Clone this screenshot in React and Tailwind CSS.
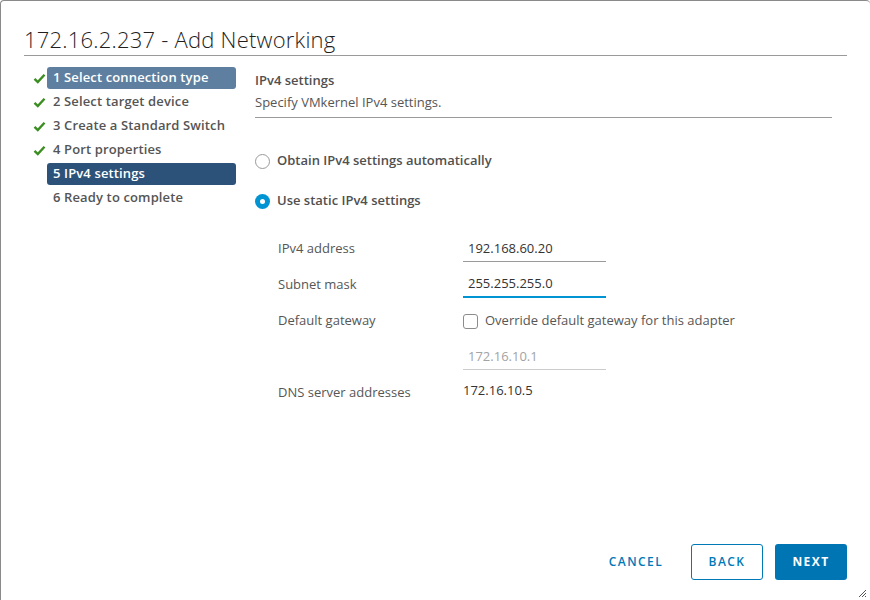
import React from "react";

const steps = [
  { label: "1 Select connection type", done: true, tone: "visited" },
  { label: "2 Select target device", done: true },
  { label: "3 Create a Standard Switch", done: true },
  { label: "4 Port properties", done: true },
  { label: "5 IPv4 settings", done: false, tone: "current" },
  { label: "6 Ready to complete", done: false },
];

function Check() {
  return (
    <svg width="13" height="11" viewBox="0 0 13 11" className="shrink-0">
      <path d="M1.5 5.8 L4.8 9 L11.5 1.8" fill="none" stroke="#3a8d1f" strokeWidth="2.4" />
    </svg>
  );
}

function StepNav() {
  return (
    <nav className="flex w-[230px] shrink-0 flex-col pl-[8px] pt-[11px]">
      {steps.map((step) => (
        <div key={step.label} className="flex h-[24px] items-start">
          <div className="flex h-[22px] w-[14px] items-center">{step.done ? <Check /> : null}</div>
          <div
            className={
              "flex h-[22px] w-[189px] items-center rounded-[3px] px-[6px] text-[13px] font-semibold tracking-[0.01em] " +
              (step.tone === "visited"
                ? "bg-[#5e7f9f] text-white"
                : step.tone === "current"
                  ? "bg-[#2d5279] text-white"
                  : "text-[#555555]")
            }
          >
            {step.label}
          </div>
        </div>
      ))}
    </nav>
  );
}

function Radio({ checked, label }) {
  return (
    <label className="flex h-[20px] items-center gap-[7px] text-[13px] font-semibold text-[#505050]">
      {checked ? (
        <span className="flex h-[15px] w-[15px] items-center justify-center rounded-full bg-[#0094d2]">
          <span className="h-[5px] w-[5px] rounded-full bg-white" />
        </span>
      ) : (
        <span className="h-[15px] w-[15px] rounded-full border border-[#9a9a9a] bg-white" />
      )}
      {label}
    </label>
  );
}

function FormRow({ label, children }) {
  return (
    <div className="flex h-[36px] items-center">
      <div className="w-[185px] shrink-0 text-[13px] text-[#565656]">{label}</div>
      {children}
    </div>
  );
}

function Field({ value, focused, disabled }) {
  return (
    <div
      className={
        "flex h-[25px] w-[143px] items-center px-[5px] text-[13px] " +
        (focused
          ? "border-b-2 border-[#0094d2] text-[#333]"
          : disabled
            ? "border-b border-[#cccccc] text-[#a3a3a3]"
            : "border-b border-[#9a9a9a] text-[#333]")
      }
    >
      {value}
    </div>
  );
}

export default function App() {
  return (
    <div
      className="relative flex h-[600px] w-[870px] flex-col overflow-hidden rounded-tl-[4px] rounded-tr-[4px] border-l border-t border-[#8a8a8a] bg-white"
      style={{ fontFamily: '"Open Sans", "Liberation Sans", sans-serif' }}
    >
      <header className="mx-[23px] mt-[23px] border-b border-[#9a9a9a] pb-[1px]">
        <h1 className="text-[22px] font-light leading-[30px] tracking-[0.01em] text-[#1f1f1f]">
          172.16.2.237 - Add Networking
        </h1>
      </header>

      <div className="flex flex-1 pl-[24px]">
        <StepNav />

        <section className="w-[577px] pt-[13px]">
          <div className="border-b border-[#9a9a9a] pb-[4px]">
            <h2 className="text-[13px] font-semibold leading-[22px] text-[#505050]">IPv4 settings</h2>
            <p className="text-[13px] leading-[22px] text-[#565656]">Specify VMkernel IPv4 settings.</p>
          </div>

          <div className="mt-[33px] flex flex-col gap-[20px]">
            <Radio label="Obtain IPv4 settings automatically" />
            <Radio checked label="Use static IPv4 settings" />
          </div>

          <div className="ml-[23px] mt-[20px] flex flex-col">
            <FormRow label="IPv4 address">
              <Field value="192.168.60.20" />
            </FormRow>
            <FormRow label="Subnet mask">
              <Field value="255.255.255.0" focused />
            </FormRow>
            <FormRow label="Default gateway">
              <label className="flex items-center gap-[7px] text-[13px] text-[#565656]">
                <span className="h-[15px] w-[15px] rounded-[3px] border border-[#8c8c8c] bg-white" />
                Override default gateway for this adapter
              </label>
            </FormRow>
            <FormRow label="">
              <Field value="172.16.10.1" disabled />
            </FormRow>
            <FormRow label="DNS server addresses">
              <div className="-mt-[4px] text-[13px] text-[#333]">172.16.10.5</div>
            </FormRow>
          </div>
        </section>
      </div>

      <footer className="flex items-center justify-end pb-[20px] pr-[23px]">
        <button className="mr-[19px] h-[36px] w-[72px] text-[12px] font-semibold tracking-[0.12em] text-[#0079b8]">
          CANCEL
        </button>
        <button className="mr-[12px] h-[36px] w-[72px] rounded-[3px] border border-[#0079b8] text-[12px] font-semibold tracking-[0.12em] text-[#0079b8]">
          BACK
        </button>
        <button className="h-[36px] w-[72px] rounded-[3px] bg-[#0075b3] text-[12px] font-bold tracking-[0.12em] text-white">
          NEXT
        </button>
      </footer>

      <svg className="absolute bottom-[2px] right-[3px]" width="9" height="9" viewBox="0 0 9 9">
        <path d="M1 8 L8 1 M4 8 L8 4 M7 8 L8 7" stroke="#555" strokeWidth="1" />
      </svg>
    </div>
  );
}
